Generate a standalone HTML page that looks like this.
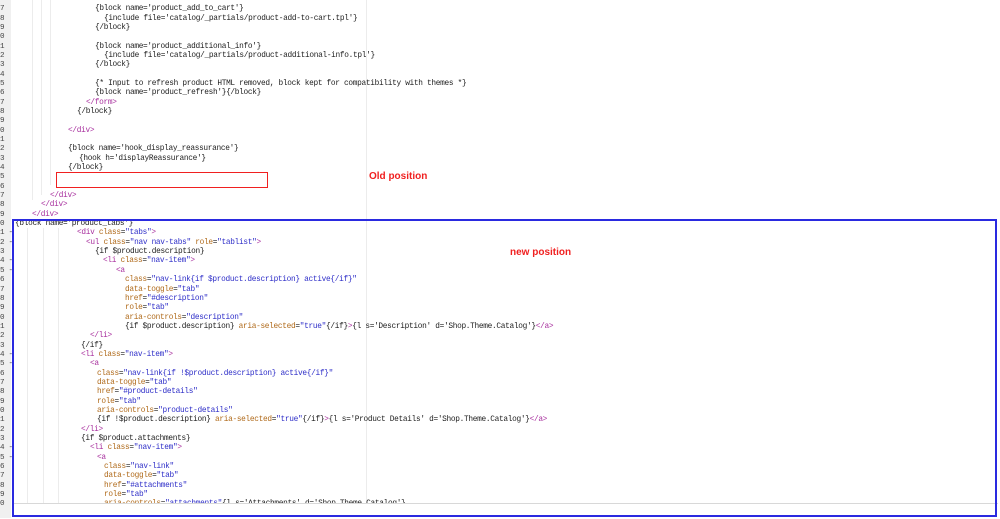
<!DOCTYPE html>
<html><head><meta charset="utf-8"><style>
body{margin:0;width:1000px;height:518px;overflow:hidden;background:#fff;position:relative;font-family:"Liberation Mono",monospace;}
.gut{position:absolute;left:0;top:0;width:11px;height:518px;background:#f0f0f0;}
.nums{position:absolute;left:0;top:5.2px;font-size:7.6px;line-height:9.35px;color:#444;white-space:pre;margin:0;font-family:"Liberation Mono",monospace;letter-spacing:-0.3px;}
.code{position:absolute;left:0;top:5.2px;margin:0;font-size:7.8px;letter-spacing:-0.31px;line-height:9.35px;color:#1e1e1e;white-space:normal;font-family:"Liberation Mono",monospace;width:1000px;}
.code div{height:9.35px;white-space:pre;}
.t{color:#a8309e}.k{color:#b06a1a}.s{color:#2e2ec8}
.g{position:absolute;width:1px;background:#ececec;}
.lbl{position:absolute;font-family:"Liberation Sans",sans-serif;font-weight:bold;font-size:10px;color:#f02020;}
</style></head><body>
<div class="gut"></div>
<div class="g" style="left:366px;top:0;height:503px"></div>
<div class="g" style="left:32px;top:0;height:200px"></div>
<div class="g" style="left:41px;top:0;height:195px"></div>
<div class="g" style="left:50px;top:0;height:185px"></div>
<div class="g" style="left:27px;top:228px;height:275px"></div>
<div class="g" style="left:43px;top:228px;height:275px"></div>
<div class="g" style="left:58px;top:228px;height:275px"></div>
<pre class="nums">7
8
9
0
1
2
3
4
5
6
7
8
9
0
1
2
3
4
5
6
7
8
9
0
1 -
2 -
3
4 -
5 -
6
7
8
9
0
1
2
3
4 -
5 -
6
7
8
9
0
1
2
3
4 -
5 -
6
7
8
9
0</pre>
<div class="code"><div style="padding-left:95px">{block name='product_add_to_cart'}</div><div style="padding-left:104px">{include file='catalog/_partials/product-add-to-cart.tpl'}</div><div style="padding-left:95px">{/block}</div><div></div><div style="padding-left:95px">{block name='product_additional_info'}</div><div style="padding-left:104px">{include file='catalog/_partials/product-additional-info.tpl'}</div><div style="padding-left:95px">{/block}</div><div></div><div style="padding-left:95px">{* Input to refresh product HTML removed, block kept for compatibility with themes *}</div><div style="padding-left:95px">{block name='product_refresh'}{/block}</div><div style="padding-left:86px"><span class="t">&lt;/form&gt;</span></div><div style="padding-left:77px">{/block}</div><div></div><div style="padding-left:68px"><span class="t">&lt;/div&gt;</span></div><div></div><div style="padding-left:68px">{block name='hook_display_reassurance'}</div><div style="padding-left:79px">{hook h='displayReassurance'}</div><div style="padding-left:68px">{/block}</div><div></div><div></div><div style="padding-left:50px"><span class="t">&lt;/div&gt;</span></div><div style="padding-left:41px"><span class="t">&lt;/div&gt;</span></div><div style="padding-left:32px"><span class="t">&lt;/div&gt;</span></div><div style="padding-left:15px">{block name='product_tabs'}</div><div style="padding-left:77px"><span class="t">&lt;div</span> <span class="k">class</span>=<span class="s">"tabs"</span><span class="t">&gt;</span></div><div style="padding-left:86px"><span class="t">&lt;ul</span> <span class="k">class</span>=<span class="s">"nav nav-tabs"</span> <span class="k">role</span>=<span class="s">"tablist"</span><span class="t">&gt;</span></div><div style="padding-left:95px">{if $product.description}</div><div style="padding-left:103px"><span class="t">&lt;li</span> <span class="k">class</span>=<span class="s">"nav-item"</span><span class="t">&gt;</span></div><div style="padding-left:116px"><span class="t">&lt;a</span></div><div style="padding-left:125px"><span class="k">class</span>=<span class="s">"nav-link{if $product.description} active{/if}"</span></div><div style="padding-left:125px"><span class="k">data-toggle</span>=<span class="s">"tab"</span></div><div style="padding-left:125px"><span class="k">href</span>=<span class="s">"#description"</span></div><div style="padding-left:125px"><span class="k">role</span>=<span class="s">"tab"</span></div><div style="padding-left:125px"><span class="k">aria-controls</span>=<span class="s">"description"</span></div><div style="padding-left:125px">{if $product.description} <span class="k">aria-selected</span>=<span class="s">"true"</span>{/if}<span class="t">&gt;</span>{l s='Description' d='Shop.Theme.Catalog'}<span class="t">&lt;/a&gt;</span></div><div style="padding-left:90px"><span class="t">&lt;/li&gt;</span></div><div style="padding-left:81px">{/if}</div><div style="padding-left:81px"><span class="t">&lt;li</span> <span class="k">class</span>=<span class="s">"nav-item"</span><span class="t">&gt;</span></div><div style="padding-left:90px"><span class="t">&lt;a</span></div><div style="padding-left:97px"><span class="k">class</span>=<span class="s">"nav-link{if !$product.description} active{/if}"</span></div><div style="padding-left:97px"><span class="k">data-toggle</span>=<span class="s">"tab"</span></div><div style="padding-left:97px"><span class="k">href</span>=<span class="s">"#product-details"</span></div><div style="padding-left:97px"><span class="k">role</span>=<span class="s">"tab"</span></div><div style="padding-left:97px"><span class="k">aria-controls</span>=<span class="s">"product-details"</span></div><div style="padding-left:97px">{if !$product.description} <span class="k">aria-selected</span>=<span class="s">"true"</span>{/if}<span class="t">&gt;</span>{l s='Product Details' d='Shop.Theme.Catalog'}<span class="t">&lt;/a&gt;</span></div><div style="padding-left:81px"><span class="t">&lt;/li&gt;</span></div><div style="padding-left:81px">{if $product.attachments}</div><div style="padding-left:90px"><span class="t">&lt;li</span> <span class="k">class</span>=<span class="s">"nav-item"</span><span class="t">&gt;</span></div><div style="padding-left:97px"><span class="t">&lt;a</span></div><div style="padding-left:104px"><span class="k">class</span>=<span class="s">"nav-link"</span></div><div style="padding-left:104px"><span class="k">data-toggle</span>=<span class="s">"tab"</span></div><div style="padding-left:104px"><span class="k">href</span>=<span class="s">"#attachments"</span></div><div style="padding-left:104px"><span class="k">role</span>=<span class="s">"tab"</span></div><div style="padding-left:104px"><span class="k">aria-controls</span>=<span class="s">"attachments"</span>{l s='Attachments' d='Shop.Theme.Catalog'}</div></div>
<div style="position:absolute;left:12px;top:503px;width:986px;height:15px;background:#fff;border-top:1px solid #d8d8d8"></div>
<div style="position:absolute;left:56px;top:172px;width:210px;height:14px;border:1.5px solid #f02020"></div>
<div class="lbl" style="left:369px;top:171px">Old position</div>
<div style="position:absolute;left:12px;top:219px;width:981px;height:294px;border:2px solid #2a2ae0"></div>
<div class="lbl" style="left:510px;top:247px">new position</div>
</body></html>
